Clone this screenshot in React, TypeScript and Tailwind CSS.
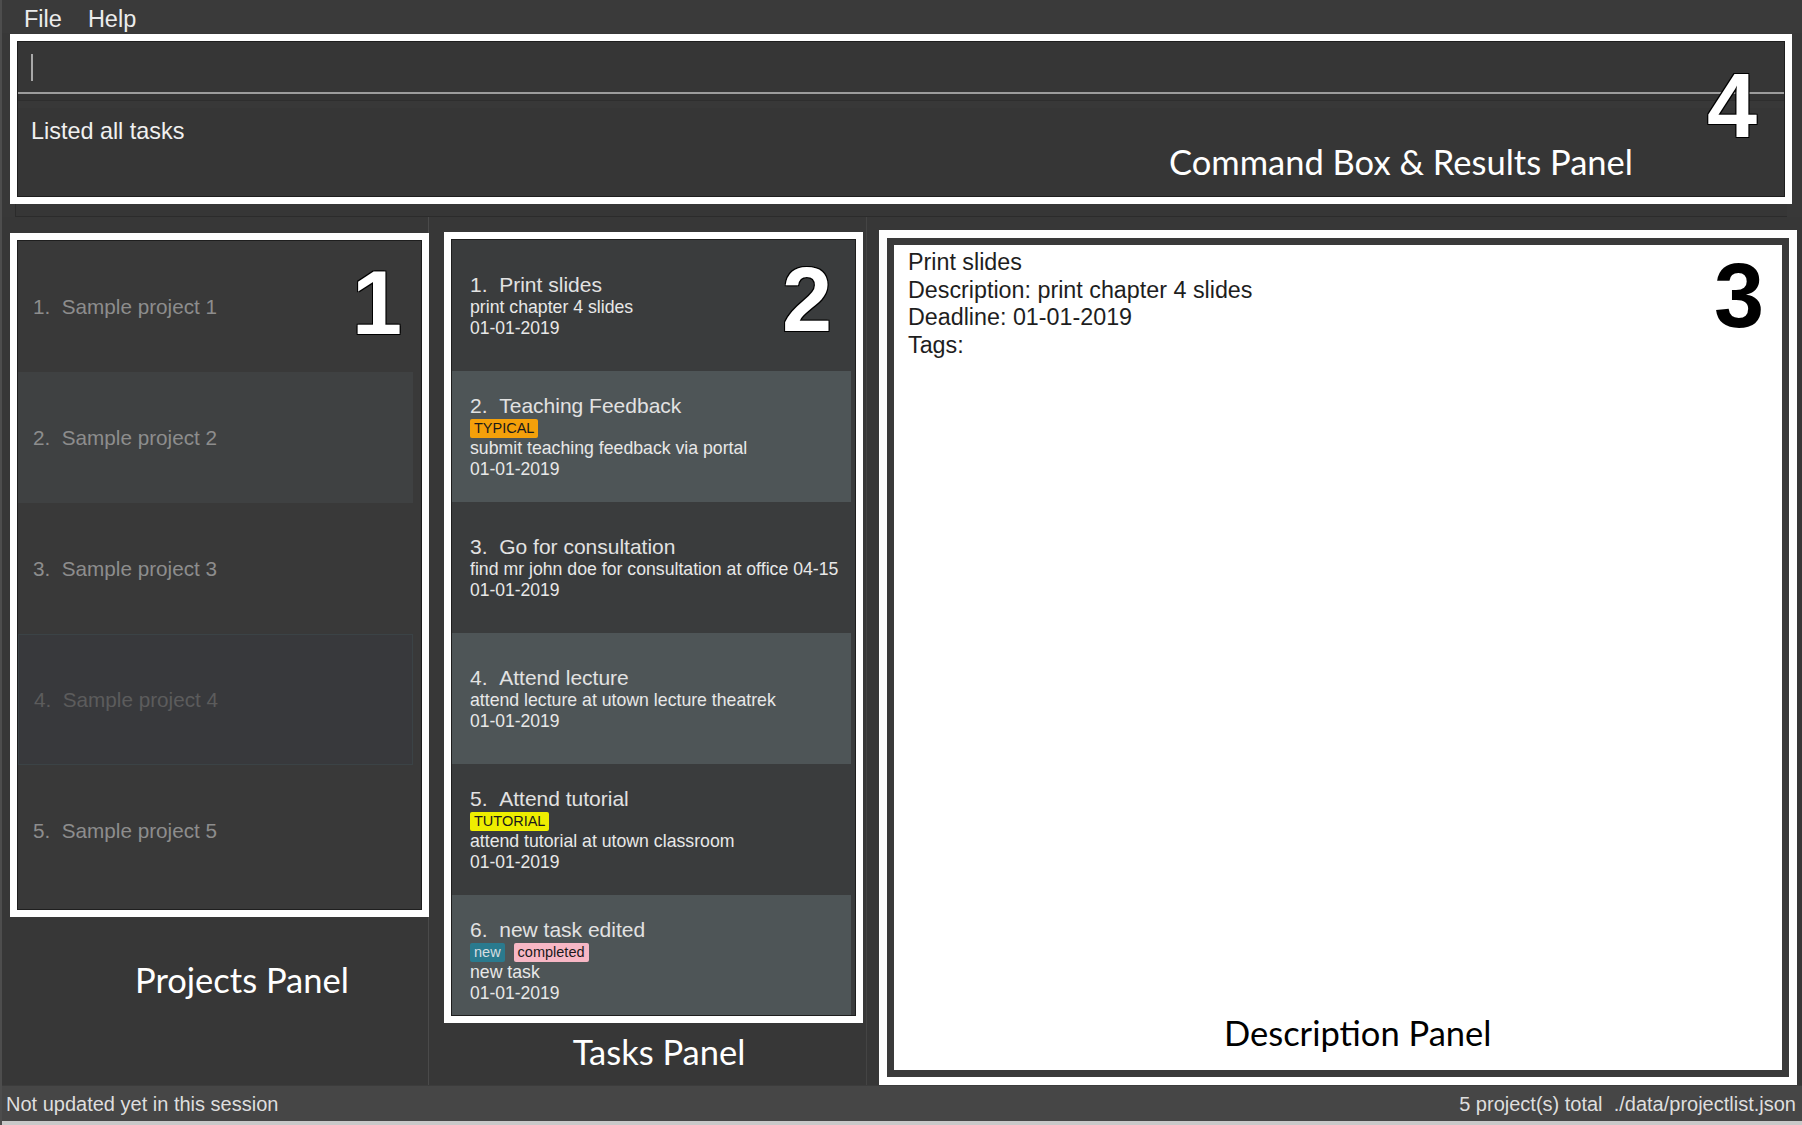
import React from 'react';

const projects = [
  { name: 'Sample project 1', bg: 'bg-[#393939]', text: 'text-[#8d8d8d]', extra: '' },
  { name: 'Sample project 2', bg: 'bg-[#3f4142]', text: 'text-[#8d8d8d]', extra: '' },
  { name: 'Sample project 3', bg: 'bg-[#393939]', text: 'text-[#8d8d8d]', extra: '' },
  { name: 'Sample project 4', bg: 'bg-[#38393c]', text: 'text-[#5c5c5c]', extra: 'border border-[#3b4346]' },
  { name: 'Sample project 5', bg: 'bg-[#393939]', text: 'text-[#8d8d8d]', extra: '' },
];

type Tag = { label: string; cls: string };

const tasks: { title: string; tags: Tag[]; desc: string; bg: string }[] = [
  { title: 'Print slides', tags: [], desc: 'print chapter 4 slides', bg: 'bg-[#3a3c3d]' },
  {
    title: 'Teaching Feedback',
    tags: [{ label: 'TYPICAL', cls: 'bg-[#f4a00a] text-[#1a1a1a]' }],
    desc: 'submit teaching feedback via portal',
    bg: 'bg-[#4e5557]',
  },
  { title: 'Go for consultation', tags: [], desc: 'find mr john doe for consultation at office 04-15', bg: 'bg-[#3a3c3d]' },
  { title: 'Attend lecture', tags: [], desc: 'attend lecture at utown lecture theatrek', bg: 'bg-[#4e5557]' },
  {
    title: 'Attend tutorial',
    tags: [{ label: 'TUTORIAL', cls: 'bg-[#eeee00] text-[#1a1a1a]' }],
    desc: 'attend tutorial at utown classroom',
    bg: 'bg-[#3a3c3d]',
  },
  {
    title: 'new task edited',
    tags: [
      { label: 'new', cls: 'bg-[#2a7a8e] text-[#d6dde0]' },
      { label: 'completed', cls: 'bg-[#f7b7c5] text-[#1a1a1a]' },
    ],
    desc: 'new task',
    bg: 'bg-[#4e5557]',
  },
];

const BigNumber = ({ n, className }: { n: string; className: string }) => (
  <span
    className={`absolute font-['Liberation_Sans',sans-serif] font-bold text-[90px] leading-none ${className}`}
  >
    {n}
  </span>
);

const outline = '[text-shadow:1px_1px_0_#000,-1px_-1px_0_#000,1px_-1px_0_#000,-1px_1px_0_#000]';

export default function App() {
  return (
    <div className="w-[1802px] h-[1125px] flex flex-col overflow-hidden bg-[#383838] border-l-2 border-[#4d4d4d] font-['Liberation_Sans',sans-serif] text-[#e4e4e4]">
      {/* menu bar */}
      <div className="h-[33px] flex items-end pb-[2px] pl-[22px] gap-[26px] text-[23.5px] leading-none text-[#ececec] bg-[#3a3a3a]">
        <span>File</span>
        <span>Help</span>
      </div>

      {/* command box & results */}
      <div className="pl-[8px] pr-[10px] pt-px">
        <div className="relative h-[170px] border-[7px] border-white">
          <div className="h-full flex flex-col border border-[#1e1e1e] bg-[#363636]">
            <div className="h-[50px] flex items-center pl-[13px]">
              <div className="w-[2px] h-[27px] bg-[#a8a8a8]" />
            </div>
            <div className="h-[2px] bg-[#9c9c9c]" />
            <div className="h-[6px] bg-[#333333]" />
            <div className="h-[8px] bg-[#383838] border-t border-[#2e2e2e]" />
            <div className="flex-1 pl-[13px] pt-[10px] text-[23.4px] leading-[26px] text-[#f0f0f0]">Listed all tasks</div>
          </div>
          <BigNumber n="4" className={`right-[28px] top-[20px] text-white ${outline}`} />
          <span className="absolute left-[1152px] top-[104px] font-['Lato',sans-serif] text-[34.5px] leading-none text-white">
            Command Box &amp; Results Panel
          </span>
        </div>
        <div className="h-[13px] mx-[5px] bg-[#363636] border-l border-b border-[#2b2b2b]" />
      </div>

      {/* panels */}
      <div className="flex-1 flex min-h-0 bg-[#373737]">
        {/* projects */}
        <div className="w-[427px] flex flex-col pl-[8px] pt-[16px] border-r border-[#4a4a4a]">
          <div className="relative w-[419px] h-[684px] border-[7px] border-white">
            <div className="h-full border border-[#1e1e1e] bg-[#393939] overflow-hidden">
              {projects.map((p, i) => (
                <div key={i} className={`h-[131px] mr-[8px] flex items-center pl-[15px] ${p.bg} ${p.extra}`}>
                  <span className={`text-[20.7px] ${p.text}`}>
                    {i + 1}.&nbsp;&nbsp;{p.name}
                  </span>
                </div>
              ))}
            </div>
            <BigNumber n="1" className={`right-[20px] top-[18px] text-white ${outline}`} />
          </div>
          <div className="pl-[125px] pt-[46px] font-['Lato',sans-serif] text-[34.5px] leading-none text-white">Projects Panel</div>
        </div>

        {/* tasks */}
        <div className="w-[438px] flex flex-col pl-[15px] pt-[15px] border-r border-[#444444]">
          <div className="relative w-[419px] h-[791px] border-[7px] border-white">
            <div className="h-full border border-[#1e1e1e] bg-[#3a3c3d] overflow-hidden">
              {tasks.map((t, i) => (
                <div
                  key={i}
                  className={`h-[131px] shrink-0 mr-[4px] flex flex-col justify-center pl-[18px] ${t.bg}`}
                >
                  <div className="text-[21px] leading-[24px] text-[#e2e2e2]">
                    {i + 1}.&nbsp;&nbsp;{t.title}
                  </div>
                  {t.tags.length > 0 && (
                    <div className="flex gap-[9px] mt-[1px]">
                      {t.tags.map((tag) => (
                        <span key={tag.label} className={`h-[19px] px-[4px] rounded-[2px] text-[14.5px] leading-[19px] ${tag.cls}`}>
                          {tag.label}
                        </span>
                      ))}
                    </div>
                  )}
                  <div className="text-[17.7px] leading-[21px] text-[#e8e8e8]">{t.desc}</div>
                  <div className="text-[17.5px] leading-[21px] text-[#e8e8e8]">01-01-2019</div>
                </div>
              ))}
            </div>
            <BigNumber n="2" className={`right-[24px] top-[16px] text-white ${outline}`} />
          </div>
          <div className="flex-1 flex items-center justify-center pl-[8px] pb-[4px] font-['Lato',sans-serif] text-[34.5px] leading-none text-white">
            Tasks Panel
          </div>
        </div>

        {/* description */}
        <div className="flex-1 pl-[12px] pr-[5px] pt-[13px]">
          <div className="relative h-full border-[8px] border-white">
            <div className="h-full flex flex-col border-[7px] border-[#3a3a3a] bg-white">
              <div className="pl-[14px] pt-[4px] text-[23.3px] leading-[27.5px] text-[#1e1e1e]">
                <div>Print slides</div>
                <div>Description: print chapter 4 slides</div>
                <div>Deadline: 01-01-2019</div>
                <div>Tags:</div>
              </div>
              <div className="flex-1" />
              <div className="pb-[20px] pl-[330px] font-['Lato',sans-serif] text-[34.5px] leading-none text-black">
                Description Panel
              </div>
            </div>
            <BigNumber n="3" className="right-[25px] top-[13px] text-black" />
          </div>
        </div>
      </div>

      {/* status bar */}
      <div className="h-[36px] flex items-center justify-between pl-[4px] pr-[6px] bg-[#464646] border-t border-[#3c3c3c] text-[20px] text-[#dedede]">
        <span>Not updated yet in this session</span>
        <span>5 project(s) total&nbsp;&nbsp;./data/projectlist.json</span>
      </div>
      <div className="h-[4px] bg-[#c9c9c9]" />
    </div>
  );
}
